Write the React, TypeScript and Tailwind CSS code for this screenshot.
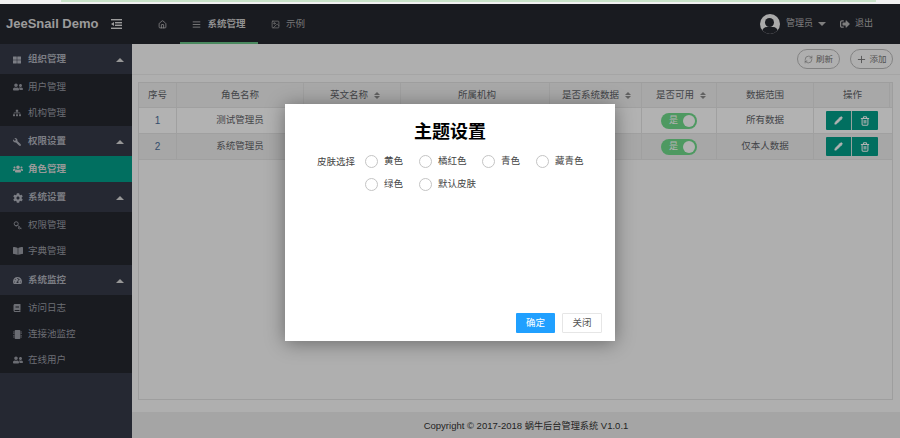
import React from "react";
import { Home, AlignJustify, Image, Key, Pencil, Trash2, RefreshCw, Plus } from "lucide-react";
import { FaUserFriends, FaSitemap, FaWrench, FaUsers, FaCog, FaBookOpen, FaTachometerAlt, FaBook, FaMicrochip, FaThLarge, FaSignOutAlt } from "react-icons/fa";

const font = "font-['Liberation_Sans','Noto_Sans_CJK_SC',sans-serif]";

function Group({ icon, label }: { icon: React.ReactNode; label: string }) {
  return (
    <div className="h-[30px] flex items-center pt-[1px] pl-[13px] pr-[7px] bg-[#363a48] text-[#b0b3bd] text-[9.5px] font-bold">
      <span className="w-[15px] flex justify-start">{icon}</span>
      <span className="flex-1">{label}</span>
      <span className="w-0 h-0 border-x-[4px] border-x-transparent border-b-[4px] border-b-[#d8d8d8] mr-[1px]" />
    </div>
  );
}

function Item({ icon, label, active }: { icon: React.ReactNode; label: string; active?: boolean }) {
  return (
    <div className={`h-[26px] flex items-center pl-[13px] text-[9.5px] ${active ? "bg-[#02a08a] text-[#dcdcdc] font-bold" : "text-[#9a9da5]"}`}>
      <span className="w-[15px] flex justify-start">{icon}</span>
      <span>{label}</span>
    </div>
  );
}

function Sort() {
  return (
    <span className="inline-flex flex-col gap-[1px] ml-[6px] align-middle">
      <span className="w-0 h-0 border-x-[3.5px] border-x-transparent border-b-[3px] border-b-[#8c8c8c]" />
      <span className="w-0 h-0 border-x-[3.5px] border-x-transparent border-t-[3px] border-t-[#8c8c8c]" />
    </span>
  );
}

const cols = [
  { w: "w-[38px]", t: "序号", p: "" },
  { w: "w-[127px]", t: "角色名称", p: "" },
  { w: "w-[97px]", t: "英文名称", s: true, p: "pl-[6px]" },
  { w: "w-[149px]", t: "所属机构", p: "pl-[4px]" },
  { w: "w-[92px]", t: "是否系统数据", s: true, p: "pl-[2px]" },
  { w: "w-[75px]", t: "是否可用", s: true, p: "pl-[4px]" },
  { w: "w-[97px]", t: "数据范围", p: "" },
  { w: "w-[76px]", t: "操作", p: "pl-[2px]" },
];

function Row({ n, name, scope, even }: { n: string; name: string; scope: string; even?: boolean }) {
  const cell = "h-[25px] flex items-center justify-center border-r border-[#e6e6e6] shrink-0";
  return (
    <div className={`flex text-[9.5px] text-[#5f6368] border-b border-[#e6e6e6] ${even ? "bg-[#f0f0f0]" : "bg-white"}`}>
      <div className={`${cell} w-[38px] text-[#4a6f9a] text-[10px]`}>{n}</div>
      <div className={`${cell} w-[127px]`}>{name}</div>
      <div className={`${cell} w-[97px]`} />
      <div className={`${cell} w-[149px]`} />
      <div className={`${cell} w-[92px]`} />
      <div className={`${cell} w-[75px]`}>
        <span className="w-[36px] h-[16px] rounded-full bg-[#70dc8c] flex items-center justify-between pl-[8px] pr-[2px] text-white text-[9px]">
          是<span className="w-[12px] h-[12px] rounded-full bg-white" />
        </span>
      </div>
      <div className={`${cell} w-[97px]`}>{scope}</div>
      <div className="h-[25px] w-[76px] flex items-center justify-center shrink-0">
        <span className="flex h-[19px] rounded-[1px] overflow-hidden bg-[#02a08a]">
          <span className="w-[26px] flex items-center justify-center border-r border-[#d8e8e4]"><Pencil size={9} color="#fff" fill="#fff" /></span>
          <span className="w-[26px] flex items-center justify-center"><Trash2 size={10} color="#fff" strokeWidth={2.5} /></span>
        </span>
      </div>
    </div>
  );
}

export default function App() {
  return (
    <div className={`relative w-[900px] h-[438px] overflow-hidden ${font} bg-[#f1f1f1]`}>
      <div className="h-[4px] bg-[#f1f1f1] pl-[61px] pr-[24px]">
        <div className="h-[2px] bg-[#c9e3c9]" />
      </div>
      <div className="relative h-[434px] overflow-hidden">
        <header className="h-[40px] bg-[#25272f] flex items-center text-[#c9c9c9]">
          <div className="w-[132px] shrink-0 flex items-center pl-[6px]">
            <span className="text-[13px] font-bold text-[#dedede] whitespace-nowrap">JeeSnail Demo</span>
            <svg width="11" height="10" viewBox="0 0 11 10" className="ml-[12px]" fill="#e0e0e0">
              <rect x="0" y="0" width="11" height="1.4" />
              <rect x="4" y="3" width="7" height="1.4" />
              <rect x="4" y="5.6" width="7" height="1.4" />
              <rect x="0" y="8.6" width="11" height="1.4" />
              <path d="M0 5 L3 3 V7 Z" />
            </svg>
          </div>
          <div className="flex h-full text-[9.5px] font-bold">
            <div className="w-[48px] pl-[12px] flex items-center justify-center"><Home size={9} /></div>
            <div className="w-[78px] h-full flex items-center justify-center gap-[6px] border-b-[2px] border-[#6ac589] pt-[2px] text-[#d0d0d0]"><AlignJustify size={9} />系统管理</div>
            <div className="w-[47px] ml-[13px] flex items-center gap-[6px] font-normal text-[#a8a8a8]"><Image size={9} />示例</div>
          </div>
          <div className="ml-auto flex items-center text-[9px] text-[#b5b5b5] pr-[27px]">
            <span className="w-[20px] h-[20px] rounded-full bg-[#f4f4f4] overflow-hidden relative flex justify-center">
              <span className="absolute top-[4px] w-[9px] h-[9px] rounded-full bg-[#25272f]" />
              <span className="absolute top-[13px] w-[16px] h-[10px] rounded-full bg-[#25272f]" />
            </span>
            <span className="ml-[6px]">管理员</span>
            <span className="ml-[5px] w-0 h-0 border-x-[4px] border-x-transparent border-t-[4px] border-t-[#b5b5b5]" />
            <FaSignOutAlt size={10} className="ml-[14px]" />
            <span className="ml-[5px]">退出</span>
          </div>
        </header>

        <div className="flex h-[394px]">
          <aside className="w-[132px] shrink-0 bg-[#363a48] flex flex-col">
            <Group icon={<FaThLarge size={8} />} label="组织管理" />
            <div className="bg-[#25272f]">
              <Item icon={<FaUserFriends size={10} />} label="用户管理" />
              <Item icon={<FaSitemap size={8} />} label="机构管理" />
            </div>
            <Group icon={<FaWrench size={8} className="-scale-x-100" />} label="权限设置" />
            <Item active icon={<FaUsers size={10} />} label="角色管理" />
            <Group icon={<FaCog size={10} />} label="系统设置" />
            <div className="bg-[#25272f] pb-[1px]">
              <Item icon={<Key size={9} className="rotate-90" strokeWidth={2.5} />} label="权限管理" />
              <Item icon={<FaBookOpen size={10} />} label="字典管理" />
            </div>
            <Group icon={<FaTachometerAlt size={9} />} label="系统监控" />
            <div className="bg-[#25272f]">
              <Item icon={<FaBook size={8} />} label="访问日志" />
              <Item icon={<FaMicrochip size={9} />} label="连接池监控" />
              <Item icon={<FaUserFriends size={10} />} label="在线用户" />
            </div>
          </aside>

          <main className="flex-1 flex flex-col min-w-0 bg-[#fbfbfb]">
            <div className="h-[31px] shrink-0 border-b border-[#ececec] flex items-center justify-end pr-[7px] gap-[10px] text-[8.5px] text-[#777]">
              <span className="h-[20px] w-[43px] rounded-full border border-[#bbb] flex items-center justify-center gap-[3px]"><RefreshCw size={9} strokeWidth={1.5} />刷新</span>
              <span className="h-[20px] w-[43px] rounded-full border border-[#bbb] flex items-center justify-center gap-[2px]"><Plus size={11} />添加</span>
            </div>
            <div className="flex-1 ml-[6px] mr-[7px] mt-[7px] border border-[#e2e2e2] bg-[#fbfbfb] min-h-0">
              <div className="flex text-[9.5px] text-[#5f6368] bg-[#f1f1f1] border-b border-[#e6e6e6]">
                {cols.map((c) => (
                  <div key={c.t} className={`${c.w} ${c.p} h-[24px] shrink-0 flex items-center justify-center border-r border-[#e6e6e6] whitespace-nowrap`}>
                    {c.t}{c.s && <Sort />}
                  </div>
                ))}
              </div>
              <Row n="1" name="测试管理员" scope="所有数据" />
              <Row n="2" name="系统管理员" scope="仅本人数据" even />
            </div>
            <div className="h-[12px] shrink-0" />
            <footer className="h-[26px] shrink-0 bg-[#ededed] flex items-center justify-center pl-[20px] pt-[2px] text-[9.5px] text-[#333]">
              <span>Copyright © 2017-2018 <span className="text-[9.2px]">蜗牛后台管理系统</span> V1.0.1</span>
            </footer>
          </main>
        </div>

        <div className="absolute inset-0 bg-black/30" />
        <div className="absolute left-[285px] top-[100px] w-[330px] h-[237px] bg-white shadow-[0_2px_18px_rgba(0,0,0,0.4)] flex flex-col">
          <h1 className="text-[18px] font-bold text-black text-center leading-[24px] mt-[16px]">主题设置</h1>
          <div className="flex mt-[6px] text-[9.5px] text-[#444]">
            <span className="w-[70px] text-right leading-[24px] shrink-0">皮肤选择</span>
            <div className="ml-[10px] flex flex-wrap w-[240px]">
              {[["黄色","w-[54px]"],["橘红色","w-[63px]"],["青色","w-[54px]"],["藏青色","w-[60px]"],["绿色","w-[54px]"],["默认皮肤","w-[70px]"]].map(([t,w]) => (
                <label key={t} className={`${w} h-[23px] flex items-center whitespace-nowrap`}>
                  <span className="w-[13px] h-[13px] rounded-full border border-[#c4c4c4] bg-white shrink-0" />
                  <span className="ml-[6px]">{t}</span>
                </label>
              ))}
            </div>
          </div>
          <div className="mt-auto mb-[8px] mr-[13px] flex justify-end gap-[7px] text-[9.5px]">
            <button className="w-[39px] h-[20px] bg-[#20a0ff] text-white rounded-[1px]">确定</button>
            <button className="w-[40px] h-[20px] bg-white border border-[#e6e6e6] text-[#555] rounded-[1px]">关闭</button>
          </div>
        </div>
      </div>
    </div>
  );
}
